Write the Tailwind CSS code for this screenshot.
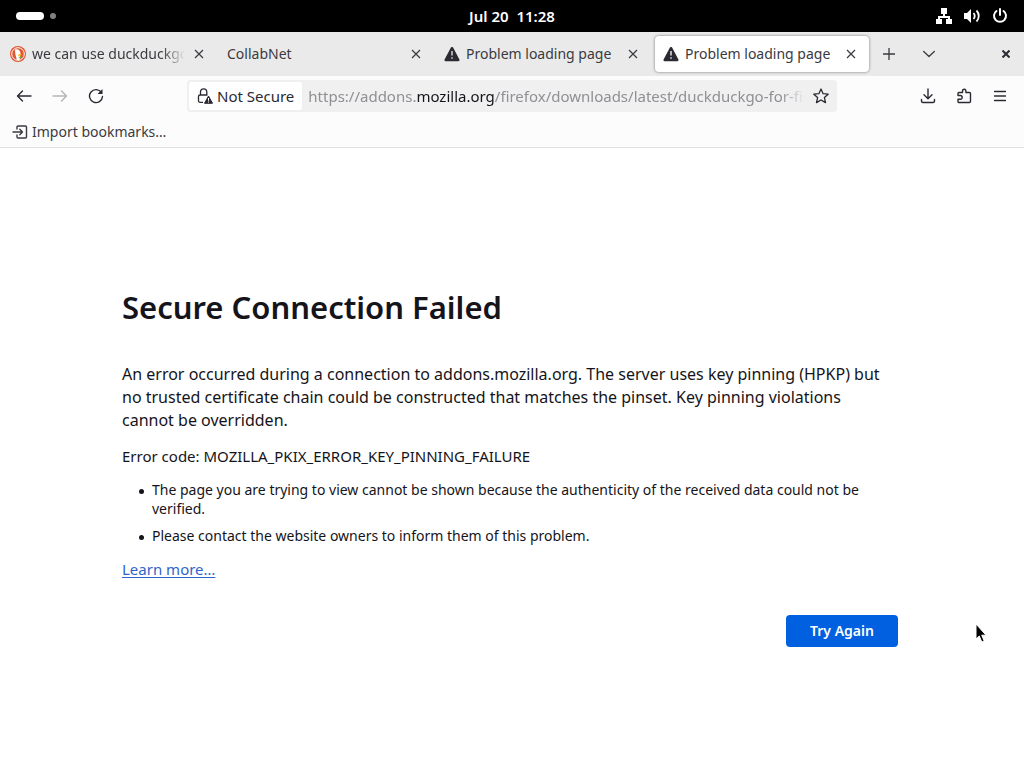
<!DOCTYPE html>
<html lang="en">
<head>
    <meta charset="UTF-8">
    <meta name="viewport" content="width=device-width, initial-scale=1.0">
    <title>Problem loading page</title>
    <script src="https://cdn.jsdelivr.net/npm/@tailwindcss/browser@4"></script>
</head>
<body class="flex min-h-screen flex-col bg-white font-['Noto_Sans',sans-serif] text-[#15141a]">
    <!-- System bar -->
    <header class="grid h-8 grid-cols-3 items-center bg-black px-4 text-[15px] font-semibold text-white">
        <div class="flex items-center gap-1.5">
            <span class="h-2 w-7 rounded-full bg-white"></span>
            <span class="size-1.5 rounded-full bg-[#808080]"></span>
        </div>
        <time class="text-center whitespace-pre">Jul 20  11:28</time>
        <div class="flex items-center justify-end gap-3">
            <svg class="size-4" viewBox="0 0 16 16" fill="currentColor" aria-label="Network"><path d="M5 0h6v6H9v2h5v3h2v5h-6v-5h2v-1H4v1h2v5H0v-5h2V8h5V6H5z"/></svg>
            <svg class="size-4" viewBox="0 0 16 16" fill="none" stroke="currentColor" stroke-width="1.8" aria-label="Volume"><path d="M0 5h3l4-4v14l-4-4H0z" fill="currentColor" stroke="none"/><path d="M9.500 5c1.400 1.700 1.400 4.300 0 6M12.500 2.500c3 3 3 8 0 11"/></svg>
            <svg class="size-4" viewBox="0 0 16 16" fill="none" stroke="currentColor" stroke-width="2" stroke-linecap="round" aria-label="Power"><path d="M8 1v6M4.500 3a6 6 0 1 0 7 0"/></svg>
        </div>
    </header>

    <!-- Tabs -->
    <div class="flex h-11 items-center bg-[#eaeaea] pr-2 text-sm text-[#3a3a40]">
        <div class="flex min-w-0 flex-1 items-center">
            <div class="flex h-9 max-w-[217px] min-w-0 flex-1 items-center gap-1.5 pr-2.5 pl-2.5">
                <svg class="size-4 shrink-0" viewBox="0 0 16 16"><circle cx="8" cy="8" r="8" fill="#de5833"/><circle cx="8" cy="8" r="6.300" fill="none" stroke="#fff" stroke-width="1"/><path d="M5 3.500c3-1 5.500.8 5.500 4 0 2.500-1 3-.5 6.300-1 .4-2.200.4-3.200 0C6 10 5 8 5.200 6z" fill="#fff"/><path d="M8 8.500c1.500-.8 3-.8 4 0-1 .9-2.500 1.200-4 1.200z" fill="#fdb913"/><path d="m8 11 3 1.500v-2z" fill="#65bc46"/></svg>
                <a href="#" class="min-w-0 flex-1 overflow-hidden mask-r-from-85% whitespace-nowrap">we can use duckduckgo as</a>
                <button aria-label="Close tab" class="flex size-4 items-center justify-center"><svg class="size-2.5" viewBox="0 0 10 10" stroke="currentColor" stroke-width="1.2"><path d="m1 1 8 8M9 1 1 9"/></svg></button>
            </div>
            <div class="flex h-9 max-w-[217px] min-w-0 flex-1 items-center gap-1.5 pr-2.5 pl-2.5">
                <a href="#" class="min-w-0 flex-1 overflow-hidden whitespace-nowrap">CollabNet</a>
                <button aria-label="Close tab" class="flex size-4 items-center justify-center"><svg class="size-2.5" viewBox="0 0 10 10" stroke="currentColor" stroke-width="1.2"><path d="m1 1 8 8M9 1 1 9"/></svg></button>
            </div>
            <div class="flex h-9 max-w-[217px] min-w-0 flex-1 items-center gap-1.5 pr-2.5 pl-2.5">
                <svg class="size-4 shrink-0" viewBox="0 0 16 16"><path d="M8 2.200 14.300 14H1.700z" fill="#2b2a33" stroke="#2b2a33" stroke-width="2.500" stroke-linejoin="round"/><path d="M8 5v4.500M8 11.300v1.500" stroke="#eaeaea" stroke-width="1.300"/></svg>
                <a href="#" class="min-w-0 flex-1 overflow-hidden whitespace-nowrap">Problem loading page</a>
                <button aria-label="Close tab" class="flex size-4 items-center justify-center"><svg class="size-2.5" viewBox="0 0 10 10" stroke="currentColor" stroke-width="1.2"><path d="m1 1 8 8M9 1 1 9"/></svg></button>
            </div>
            <div class="ml-1 flex h-9 max-w-[214px] min-w-0 flex-1 items-center gap-1.5 rounded bg-white pr-2.5 pl-2 shadow-[0_0_3px_rgba(0,0,0,0.5)]">
                <svg class="size-4 shrink-0" viewBox="0 0 16 16"><path d="M8 2.200 14.300 14H1.700z" fill="#2b2a33" stroke="#2b2a33" stroke-width="2.500" stroke-linejoin="round"/><path d="M8 5v4.500M8 11.300v1.500" stroke="#fff" stroke-width="1.300"/></svg>
                <a href="#" class="min-w-0 flex-1 overflow-hidden whitespace-nowrap">Problem loading page</a>
                <button aria-label="Close tab" class="flex size-4 items-center justify-center"><svg class="size-2.5" viewBox="0 0 10 10" stroke="currentColor" stroke-width="1.2"><path d="m1 1 8 8M9 1 1 9"/></svg></button>
            </div>
            <button aria-label="New tab" class="ml-2.5 flex size-5 items-center justify-center"><svg class="size-3" viewBox="0 0 12 12" stroke="currentColor" stroke-width="1.3"><path d="M6 0v12M0 6h12"/></svg></button>
            <button aria-label="List all tabs" class="ml-5 flex size-5 items-center justify-center"><svg class="size-3" viewBox="0 0 12 12" fill="none" stroke="currentColor" stroke-width="1.3" stroke-linecap="round" stroke-linejoin="round"><path d="m.7 3.500 5.300 5 5.300-5"/></svg></button>
        </div>
        <button aria-label="Close window" class="flex size-5 items-center justify-center"><svg class="size-2" viewBox="0 0 8 8" stroke="#2b2a33" stroke-width="2"><path d="m.5.5 7 7M7.500.5l-7 7"/></svg></button>
    </div>

    <!-- Navigation -->
    <nav class="flex h-10 items-center bg-[#fcfcfc] px-4 text-[15px] text-[#2b2a33]">
        <div class="flex gap-5">
            <button aria-label="Back"><svg class="size-4" viewBox="0 0 16 16" fill="none" stroke="currentColor" stroke-width="1.4" stroke-linecap="round" stroke-linejoin="round"><path d="M15 8H1.500M6.500 3 1.500 8l5 5"/></svg></button>
            <button aria-label="Forward" disabled class="text-[#b5b5b8]"><svg class="size-4" viewBox="0 0 16 16" fill="none" stroke="currentColor" stroke-width="1.4" stroke-linecap="round" stroke-linejoin="round"><path d="M1 8h13.500M9.500 3l5 5-5 5"/></svg></button>
            <button aria-label="Reload"><svg class="size-4" viewBox="0 0 16 16" fill="none" stroke="currentColor" stroke-width="1.400" stroke-linecap="round"><path d="M13.500 4.600A6.500 6.500 0 1 0 14.500 8.500"/><path d="M14.500 1v5h-5z" fill="currentColor" stroke="none"/></svg></button>
        </div>
        <div class="mx-auto flex h-8 min-w-0 max-w-[650px] flex-1 items-center rounded bg-[#f0f0f1] pr-2">
            <button class="flex h-8 shrink-0 items-center gap-1 rounded border-2 border-[#f0f0f1] bg-white px-2">
                <svg class="size-4" viewBox="0 0 16 16" fill="none"><path d="M6 14.300H3A1.500 1.500 0 0 1 1.500 12.800V8.500A1.500 1.500 0 0 1 3 7h7.500M3.500 7V4a3 3 0 0 1 6.300 0v3" stroke="#2b2a33" stroke-width="1.300"/><path d="m11.500 8 4 7.300h-8z" fill="#2b2a33" stroke="#2b2a33" stroke-linejoin="round"/><path d="M11.500 10v2.800M11.500 13.500v1" stroke="#fff"/></svg>
                Not Secure
            </button>
            <div class="ml-1 min-w-0 flex-1 overflow-hidden mask-r-from-95% whitespace-nowrap text-[#8f8f94]">https://addons.<span class="text-[#15141a]">mozilla.org</span>/firefox/downloads/latest/duckduckgo-for-firefox</div>
            <button aria-label="Bookmark this page" class="ml-2"><svg class="size-4" viewBox="0 0 16 16" fill="none" stroke="currentColor" stroke-width="1.300" stroke-linejoin="round"><path d="m8 1 2.100 4.700 5.100.5-3.800 3.400 1.100 5L8 12l-4.500 2.600 1.100-5L.8 6.200l5.100-.5z"/></svg></button>
        </div>
        <div class="flex gap-5">
            <button aria-label="Downloads"><svg class="size-4" viewBox="0 0 16 16" fill="none" stroke="currentColor" stroke-width="1.400" stroke-linecap="round" stroke-linejoin="round"><path d="M8 1v9.500M4 6.800l4 3.900 4-3.900M1.500 11.500v1.500A1.500 1.500 0 0 0 3 14.500h10a1.500 1.500 0 0 0 1.500-1.500v-1.500"/></svg></button>
            <button aria-label="Extensions"><svg class="size-4" viewBox="0 0 16 16" fill="none" stroke="currentColor" stroke-width="1.400" stroke-linejoin="round"><path d="M2 7.500V5.500a1 1 0 0 1 1-1h3.500V3a1.700 1.700 0 0 1 3.400 0v1.500h3.600a1 1 0 0 1 1 1v8a1 1 0 0 1-1 1H3a1 1 0 0 1-1-1v-2.200h2.300a1.900 1.900 0 0 0 0-3.800z"/></svg></button>
            <button aria-label="Menu"><svg class="size-4" viewBox="0 0 16 16" stroke="currentColor" stroke-width="1.300" stroke-linecap="round"><path d="M2.500 3.500h11M2.500 8h11M2.500 12.500h11"/></svg></button>
        </div>
    </nav>
    <div class="flex h-8 items-center border-b border-[#e0e0e0] bg-[#fcfcfc] px-3 text-sm text-[#3a3a40]">
        <button class="flex items-center gap-1">
            <svg class="size-4" viewBox="0 0 16 16" fill="none" stroke="currentColor" stroke-width="1.400" stroke-linecap="round" stroke-linejoin="round"><path d="M5 5V3a1 1 0 0 1 1-1h7.500a1 1 0 0 1 1 1v10a1 1 0 0 1-1 1H6a1 1 0 0 1-1-1v-2M1 8h9.500M7.800 5.300 10.500 8l-2.700 2.700"/></svg>
            Import bookmarks…
        </button>
    </div>

    <!-- Error page -->
    <main class="mx-auto w-full max-w-[780px] flex-1 pt-[135px] pr-1 text-[15px] leading-5">
        <h1 class="text-[31px] leading-12 font-semibold">Secure Connection Failed</h1>
        <p class="mt-8 pr-2 text-base leading-[23px]">An error occurred during a connection to addons.mozilla.org. The server uses key pinning (HPKP) but no trusted certificate chain could be constructed that matches the pinset. Key pinning violations cannot be overridden.</p>
        <p class="mt-3.5">Error code: MOZILLA_PKIX_ERROR_KEY_PINNING_FAILURE</p>
        <ul class="mt-3.5 space-y-2 pl-[30px] text-sm leading-[19px]">
            <li class="before:mr-2 before:-ml-[13px] before:inline-block before:size-[5px] before:rounded-full before:bg-current before:align-middle">The page you are trying to view cannot be shown because the authenticity of the received data could not be verified.</li>
            <li class="before:mr-2 before:-ml-[13px] before:inline-block before:size-[5px] before:rounded-full before:bg-current before:align-middle">Please contact the website owners to inform them of this problem.</li>
        </ul>
        <p class="mt-3.5"><a href="#" class="text-[#2f65c8] underline underline-offset-2">Learn more…</a></p>
        <div class="mt-9 flex justify-end">
            <button class="h-8 min-w-28 rounded bg-[#0060df] px-4 text-sm font-semibold text-white">Try Again</button>
        </div>
    </main>

    <!-- Pointer -->
    <svg class="pointer-events-none absolute top-[623px] left-[975px] h-5 w-3" viewBox="0 0 12 20"><path d="M1 1v15l3.300-3 2.500 6 2.400-1-2.500-5.800H11z" fill="#000" stroke="#fff"/></svg>
</body>
</html>
